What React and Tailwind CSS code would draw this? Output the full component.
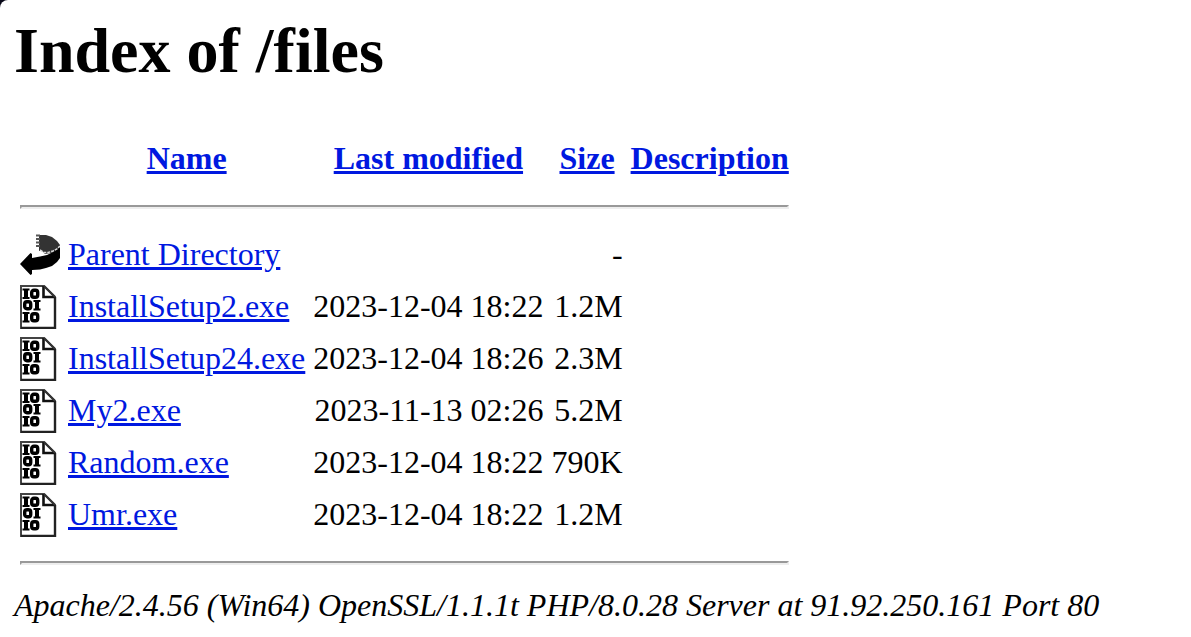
const files = [
  { name: "Parent Directory", date: "", size: "-", parent: true },
  { name: "InstallSetup2.exe", date: "2023-12-04 18:22", size: "1.2M" },
  { name: "InstallSetup24.exe", date: "2023-12-04 18:26", size: "2.3M" },
  { name: "My2.exe", date: "2023-11-13 02:26", size: "5.2M" },
  { name: "Random.exe", date: "2023-12-04 18:22", size: "790K" },
  { name: "Umr.exe", date: "2023-12-04 18:22", size: "1.2M" },
];

function BackIcon() {
  return (
    <svg className="block h-11 w-10" viewBox="0 0 40 44" aria-hidden="true">
      <path d="M19 2h7l6 2 5 4 3 4v3l-4 3-5 2-6 1-3-3h-3z" fill="#333" />
      <path
        d="M16 2.500h4M16 6h4M16 9.500h4M16 13h4"
        stroke="#555"
        strokeWidth="2"
      />
      <path
        d="M40 14v11l-3 4-5 4-6 2-6 1.500-8 .5v4l-1.500 1L0 31l10.500-11 1.500 1v4l8-1.500 7-1.500 6-3 5-4z"
        fill="#000"
      />
      <path
        d="M20 17l4 2.500h4l5-1.500 4-2 3-3"
        fill="none"
        stroke="#ddd"
        strokeWidth="1.500"
        strokeDasharray="3 1"
      />
    </svg>
  );
}

function BinaryIcon() {
  return (
    <svg className="block h-11 w-10" viewBox="0 0 40 44" aria-hidden="true">
      <path d="M1 1h23l11 11v31H1z" fill="#fff" stroke="#444" strokeWidth="2" />
      <path d="M1 43h34V12" fill="none" stroke="#222" strokeWidth="2.400" />
      <path d="M23.500 1v11H35" fill="none" stroke="#111" strokeWidth="2.600" />
      <path d="M24 1l11 11" fill="none" stroke="#333" strokeWidth="2" />
      <g fill="none" stroke="#000" strokeWidth="3.400">
        <rect x="11.700" y="5.200" width="6" height="7" rx="2.200" />
        <rect x="4.700" y="16.700" width="6" height="7" rx="2.200" />
        <rect x="11.700" y="28.700" width="6" height="7" rx="2.200" />
      </g>
      <g fill="#000">
        <path d="M2.500 3.500h7v2H8V12h1.500v2h-7v-2H4V5.500H2.500z" />
        <path d="M13.500 15h7v2H19v6.500h1.500v2h-7v-2H15V17h-1.500z" />
        <path d="M2.500 27h7v2H8v6.500h1.500v2h-7v-2H4V29H2.500z" />
      </g>
    </svg>
  );
}

function Rule() {
  return (
    <tr>
      <th colSpan={5} className="p-[2px]">
        <hr className="my-4 h-1 border-2 border-t-[#999] border-r-[#eee] border-b-[#eee] border-l-[#999]" />
      </th>
    </tr>
  );
}

function Heading({ children }) {
  return (
    <th className="px-[2px] pt-[2px] pb-[4px] font-bold">
      <a href="#" className="text-[#0018e0] underline">
        {children}
      </a>
    </th>
  );
}

export default function App() {
  return (
    <div className="min-h-screen bg-[#080818]">
      <main className="min-h-screen rounded-tl-lg bg-white px-[14px] pt-[14px] font-['Liberation_Serif',serif] text-[32px] leading-9 text-black">
        <h1 className="mb-[43px] text-[64px] leading-[74px] font-bold">
          Index of /files
        </h1>
        <table className="border-separate border-spacing-[4px] whitespace-nowrap">
          <thead>
            <tr className="h-12">
              <td className="p-[2px]" />
              <Heading>Name</Heading>
              <Heading>Last modified</Heading>
              <Heading>Size</Heading>
              <Heading>Description</Heading>
            </tr>
          </thead>
          <tbody>
            <Rule />
            {files.map((file) => (
              <tr key={file.name}>
                <td className="p-[2px] align-top">
                  {file.parent ? <BackIcon /> : <BinaryIcon />}
                </td>
                <td className="px-[2px] pt-[2px] pb-[4px]">
                  <a href="#" className="text-[#0018e0] underline">
                    {file.name}
                  </a>
                </td>
                <td className="px-[2px] pt-[2px] pb-[4px] text-right">{file.date}</td>
                <td className="px-[2px] pt-[2px] pb-[4px] text-right">{file.size}</td>
                <td className="p-[2px]" />
              </tr>
            ))}
            <Rule />
          </tbody>
        </table>
        <address className="italic">
          Apache/2.4.56 (Win64) OpenSSL/1.1.1t PHP/8.0.28 Server at
          91.92.250.161 Port 80
        </address>
      </main>
    </div>
  );
}
